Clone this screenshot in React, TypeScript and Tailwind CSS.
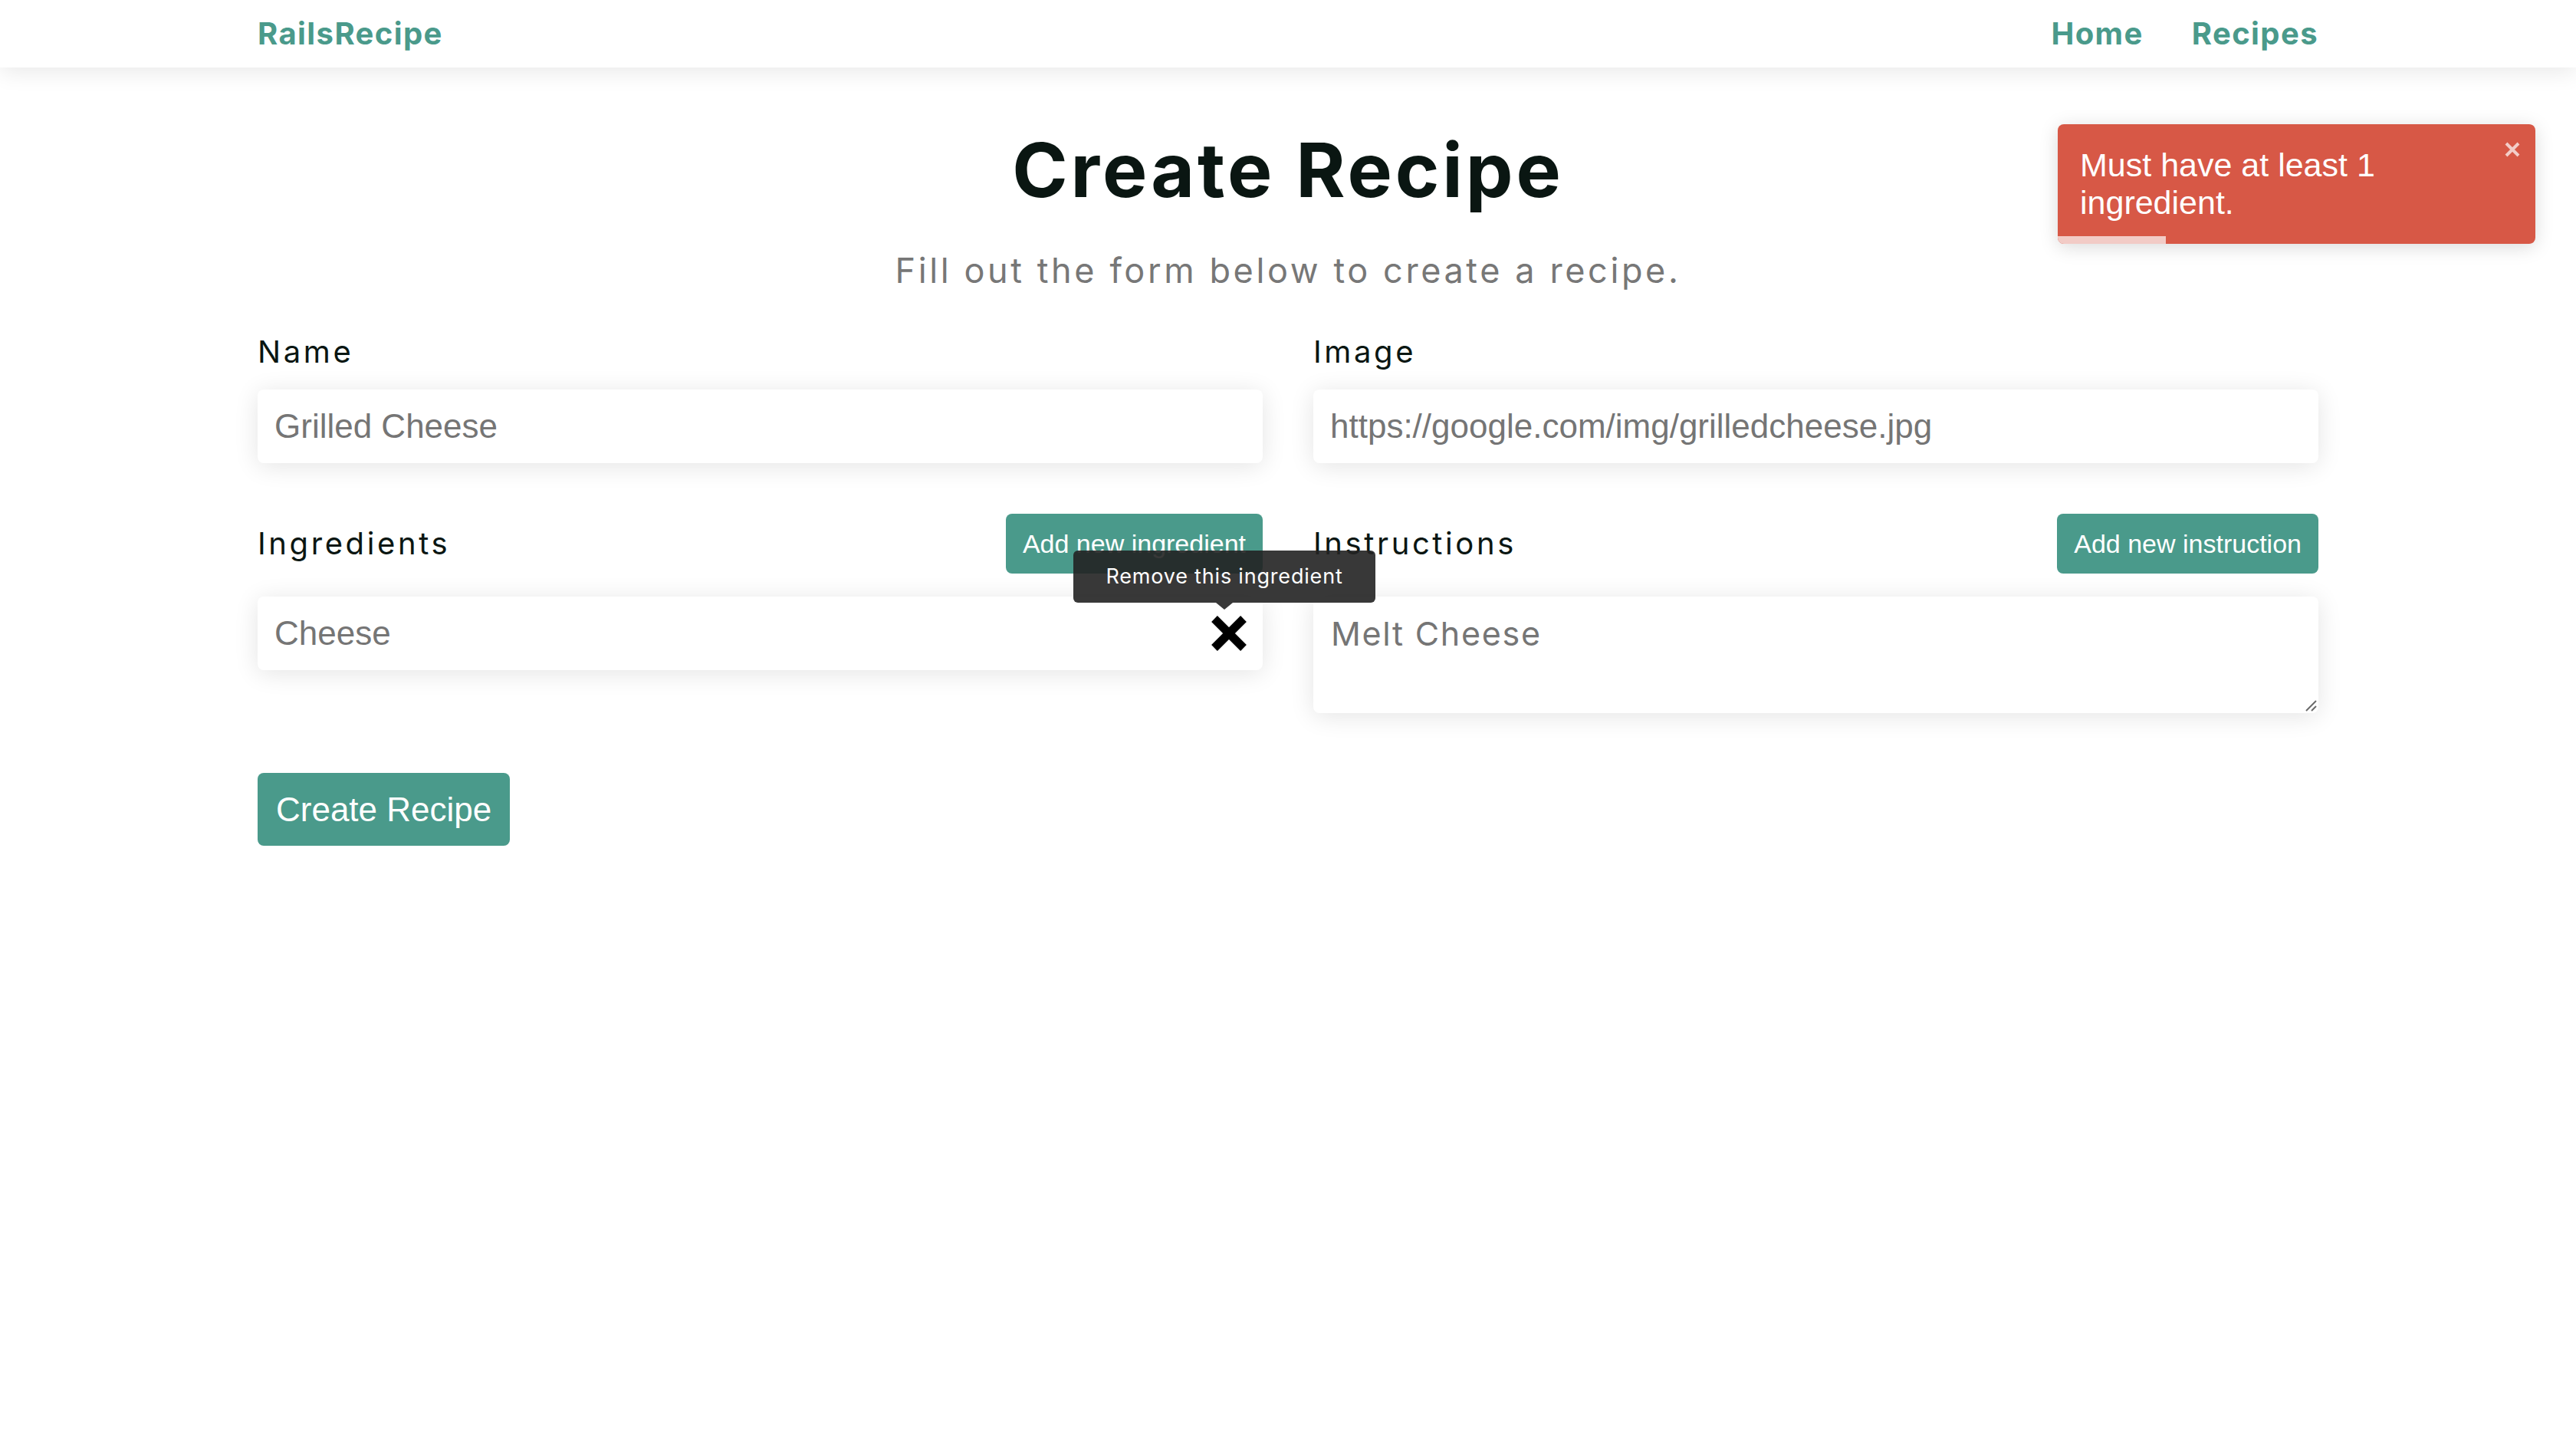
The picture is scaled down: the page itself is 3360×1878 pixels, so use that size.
const green = 'bg-[#4a9a8b]'
const inputCls =
  "h-[96px] w-full rounded-[8px] bg-white px-[22px] font-['Liberation_Sans',Arial,sans-serif] text-[44px] shadow-[0_4px_32px_rgba(0,0,0,0.11)] outline-none placeholder:text-[#757575]"
const btnCls = `${green} h-[78px] rounded-[8px] px-[22px] font-['Liberation_Sans',Arial,sans-serif] text-[34px] text-white`

function Field({ label, children }: { label: string; children: React.ReactNode }) {
  return (
    <div>
      <label className="block text-[40px] leading-[39px] tracking-[0.09em] text-[#0a1612]">{label}</label>
      {children}
    </div>
  )
}

export default function App() {
  return (
    <div className="relative min-h-screen bg-white font-['Inter',sans-serif]">
      <nav className="relative z-10 h-[88px] bg-white shadow-[0_6px_28px_rgba(0,0,0,0.09)]">
        <div className="mx-auto flex h-full w-[2688px] items-center justify-between">
          <a className="text-[40px] font-bold tracking-[0.035em] text-[#4a9a8b]">RailsRecipe</a>
          <div className="flex gap-[63px] text-[40px] font-bold tracking-[0.035em] text-[#4a9a8b]">
            <a>Home</a>
            <a>Recipes</a>
          </div>
        </div>
      </nav>

      <main className="mx-auto w-[2688px] pt-[85px]">
        <h1 className="text-center text-[98px] font-bold leading-none tracking-[0.04em] text-[#0a1612]">Create Recipe</h1>
        <p className="mt-[60px] text-center text-[45px] leading-[44px] tracking-[0.08em] text-[#777777]">
          Fill out the form below to create a recipe.
        </p>

        <div className="mt-[64px] grid grid-cols-2 items-start gap-x-[66px]">
          <div>
            <Field label="Name">
              <input placeholder="Grilled Cheese" className={`mt-[30px] ${inputCls}`} />
            </Field>

            <div className="mt-[66px] flex h-[78px] items-center justify-between">
              <span className="text-[40px] tracking-[0.09em] text-[#0a1612]">Ingredients</span>
              <button className={btnCls}>Add new ingredient</button>
            </div>

            <div className="relative mt-[30px]">
              <input placeholder="Cheese" className={inputCls} />
              <button className="absolute right-[20px] top-[24px] h-[48px] w-[48px]">
                <svg viewBox="0 0 48 48" className="h-[48px] w-[48px]">
                  <path d="M5 5 L43 43 M43 5 L5 43" stroke="#000" strokeWidth="11" />
                </svg>
              </button>
              {/* tooltip */}
              <div className="absolute left-[1064px] top-[-60px] z-20 flex h-[68px] w-[394px] items-center justify-center rounded-[6px] bg-[rgba(34,34,34,0.9)] text-[27px] tracking-[0.03em] text-white">
                Remove this ingredient
                <span className="absolute bottom-[-9px] left-[186px] h-0 w-0 border-x-[11px] border-t-[9px] border-x-transparent border-t-[rgba(34,34,34,0.9)]" />
              </div>
            </div>
          </div>

          <div>
            <Field label="Image">
              <input placeholder="https://google.com/img/grilledcheese.jpg" className={`mt-[30px] ${inputCls}`} />
            </Field>

            <div className="mt-[66px] flex h-[78px] items-center justify-between">
              <span className="text-[40px] tracking-[0.09em] text-[#0a1612]">Instructions</span>
              <button className={btnCls}>Add new instruction</button>
            </div>

            <div className="relative mt-[30px]">
              <textarea
                placeholder="Melt Cheese"
                className="block h-[152px] w-full resize-none rounded-[8px] bg-white px-[23px] pt-[22px] text-[43px] leading-[52px] tracking-[0.04em] shadow-[0_4px_32px_rgba(0,0,0,0.11)] outline-none placeholder:text-[#757575]"
              />
              <svg viewBox="0 0 16 16" className="absolute bottom-[2px] right-[2px] h-[16px] w-[16px]">
                <path d="M15 2 L2 15 M15 9 L9 15" stroke="#6b6b6b" strokeWidth="2" />
              </svg>
            </div>
          </div>
        </div>

        <button className={`${green} mt-[78px] h-[95px] rounded-[8px] px-[24px] font-['Liberation_Sans',Arial,sans-serif] text-[44px] text-white`}>
          Create Recipe
        </button>
      </main>

      {/* toast */}
      <div className="absolute right-[53px] top-[162px] z-30 h-[156px] w-[623px] overflow-hidden rounded-[8px] bg-[#d75846] px-[29px] pt-[29px] shadow-[0_4px_24px_rgba(0,0,0,0.15)]">
        <p className="max-w-[480px] font-['Liberation_Sans',Arial,sans-serif] text-[43px] leading-[49px] text-white">
          Must have at least 1 ingredient.
        </p>
        <button className="absolute right-[20px] top-[23px] h-[20px] w-[20px]">
          <svg viewBox="0 0 20 20" className="h-[20px] w-[20px]">
            <path d="M2 2 L18 18 M18 2 L2 18" stroke="rgba(255,255,255,0.7)" strokeWidth="4" />
          </svg>
        </button>
        <div className="absolute bottom-0 left-0 h-[10px] w-[141px] bg-[#f2cbc6]" />
      </div>
    </div>
  )
}
